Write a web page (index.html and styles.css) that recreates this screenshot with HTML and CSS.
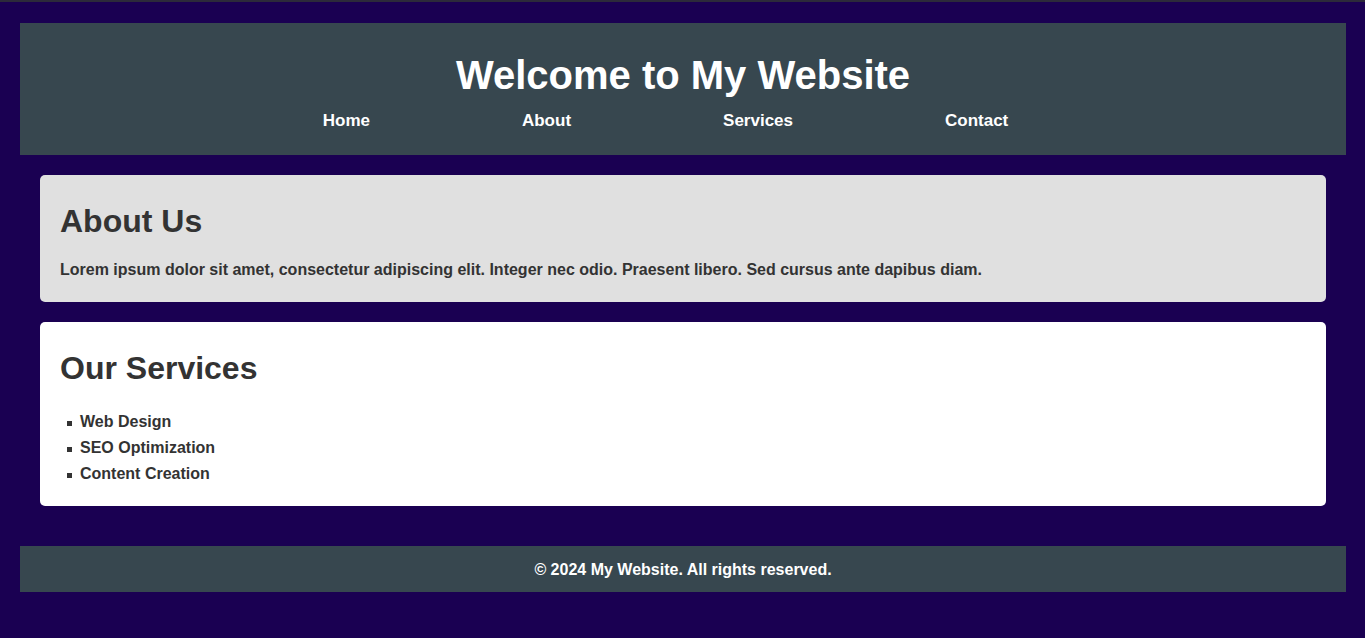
FILE: index.html
```html
<!DOCTYPE html>
<html lang="en">
<head>
<meta charset="utf-8">
<title>My Website</title>
<link rel="stylesheet" href="styles.css">
</head>
<body>
<div class="page">
  <header class="site-header">
    <h1 class="site-title">Welcome to My Website</h1>
    <nav class="site-nav">
      <a href="#" class="nav-link">Home</a>
      <a href="#" class="nav-link">About</a>
      <a href="#" class="nav-link">Services</a>
      <a href="#" class="nav-link">Contact</a>
    </nav>
  </header>
  <main class="content">
    <section class="card card-grey">
      <h2 class="card-title">About Us</h2>
      <p class="card-text">Lorem ipsum dolor sit amet, consectetur adipiscing elit. Integer nec odio. Praesent libero. Sed cursus ante dapibus diam.</p>
    </section>
    <section class="card card-white">
      <h2 class="card-title">Our Services</h2>
      <ul class="service-list">
        <li class="service-item">Web Design</li>
        <li class="service-item">SEO Optimization</li>
        <li class="service-item">Content Creation</li>
      </ul>
    </section>
  </main>
  <footer class="site-footer">
    <p class="footer-text">&copy; 2024 My Website. All rights reserved.</p>
  </footer>
</div>
</body>
</html>
```
FILE: styles.css
```css
html, body {
  margin: 0;
  padding: 0;
  background: #1a0052;
}
body {
  font-family: "Liberation Sans", Arial, sans-serif;
  font-weight: bold;
  color: #333;
  line-height: 1.5;
  border-top: 2px solid #2c2a3a;
}
.page {
  padding: 21px 19px 46px 20px;
}
.site-header {
  background: #37474f;
  color: #fff;
  text-align: center;
  padding: 22px 0 21px;
}
.site-title {
  margin: 0;
  font-size: 40px;
  line-height: 60px;
}
.site-nav {
  display: flex;
  justify-content: center;
  gap: 152px;
  margin-top: 3px;
  padding-right: 35px;
}
.nav-link {
  color: #fff;
  text-decoration: none;
  font-size: 17px;
  line-height: 26px;
}
.content {
  padding: 20px;
}
.card {
  border-radius: 5px;
  padding: 20px;
  margin-bottom: 20px;
}
.card-grey { background: #e0e0e0; }
.card-white { background: #fff; padding-bottom: 19px; }
.card-title {
  margin: 2px 0 13px;
  font-size: 32px;
  line-height: 48px;
}
.card-text {
  margin: 0;
  font-size: 16px;
  line-height: 24px;
}
.service-list {
  margin: 17px 0 0;
  padding-left: 20px;
  list-style: none;
  font-size: 16px;
  line-height: 26px;
}
.service-item {
  display: flex;
  align-items: center;
}
.service-item::before {
  content: "";
  width: 5px;
  height: 5px;
  background: #333;
  margin: 2px 8px 0 -13px;
  flex: none;
}
.site-footer {
  background: #37474f;
  color: #fff;
  text-align: center;
  padding: 12px 0 10px;
}
.footer-text {
  margin: 0;
  font-size: 16px;
  line-height: 24px;
}
```
